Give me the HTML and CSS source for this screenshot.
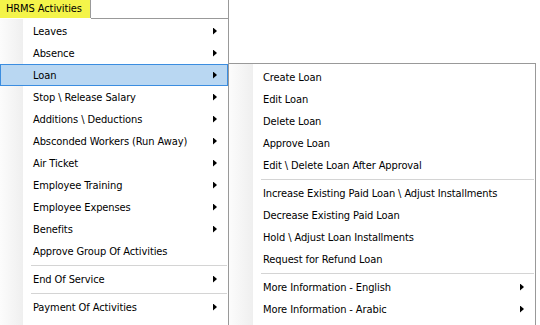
FILE: index.html
```html
<!DOCTYPE html>
<html lang="en">
<head>
    <meta charset="UTF-8">
    <meta name="viewport" content="width=device-width, initial-scale=1.0">
    <title>HRMS Activities</title>
    <link rel="stylesheet" href="styles.css">
</head>
<body>
    <div class="bar">
        <div class="tab">HRMS Activities</div>
        <div class="bar-rest"></div>
    </div>

    <div class="menus">
        <div class="menu main-menu">
            <div class="item">Leaves<span class="arrow"></span></div>
            <div class="item">Absence<span class="arrow"></span></div>
            <div class="item active">Loan<span class="arrow"></span></div>
            <div class="item">Stop \ Release Salary<span class="arrow"></span></div>
            <div class="item">Additions \ Deductions<span class="arrow"></span></div>
            <div class="item">Absconded Workers (Run Away)<span class="arrow"></span></div>
            <div class="item">Air Ticket<span class="arrow"></span></div>
            <div class="item">Employee Training<span class="arrow"></span></div>
            <div class="item">Employee Expenses<span class="arrow"></span></div>
            <div class="item">Benefits<span class="arrow"></span></div>
            <div class="item">Approve Group Of Activities</div>
            <div class="sep"></div>
            <div class="item">End Of Service<span class="arrow"></span></div>
            <div class="sep"></div>
            <div class="item">Payment Of Activities<span class="arrow"></span></div>
        </div>

        <div class="menu sub-menu">
            <div class="item">Create Loan</div>
            <div class="item">Edit Loan</div>
            <div class="item">Delete Loan</div>
            <div class="item">Approve Loan</div>
            <div class="item">Edit \ Delete Loan After Approval</div>
            <div class="sep"></div>
            <div class="item">Increase Existing Paid Loan \ Adjust Installments</div>
            <div class="item">Decrease Existing Paid Loan</div>
            <div class="item">Hold \ Adjust Loan Installments</div>
            <div class="item">Request for Refund Loan</div>
            <div class="sep"></div>
            <div class="item">More Information - English<span class="arrow"></span></div>
            <div class="item">More Information - Arabic<span class="arrow"></span></div>
        </div>
    </div>
</body>
</html>
```

FILE: styles.css
```css
body {
    font-family: "DejaVu Sans Condensed", "DejaVu Sans", sans-serif;
    font-size: 11px;
    letter-spacing: -0.1px;
    color: #000;
    margin: 0;
    padding: 0;
    background-color: #fff;
    overflow: hidden;
}
.bar {
    display: flex;
    align-items: flex-start;
}
.tab {
    width: 84px;
    height: 18px;
    line-height: 18px;
    padding-left: 6px;
    background-color: #f4f44a;
    border-right: 1px solid #999;
}
.bar-rest {
    width: 137px;
    height: 18px;
    border-bottom: 1px solid #999;
    border-right: 1px solid #999;
}
.menus {
    display: flex;
    align-items: flex-start;
}
.menu {
    background: linear-gradient(to right, #fcfcfc, #efefef) no-repeat;
    background-color: #fff;
    padding-bottom: 20px;
}
.main-menu {
    width: 228px;
    padding-top: 1px;
    border-right: 1px solid #999;
    background-size: 23px 100%;
}
.sub-menu {
    width: 306px;
    margin-top: 44px;
    margin-left: -1px;
    padding-top: 2px;
    border: 1px solid #999;
    background-size: 24px 100%;
}
.item {
    display: flex;
    align-items: center;
    height: 22px;
    padding-left: 33px;
    white-space: nowrap;
}
.sub-menu .item {
    padding-left: 34px;
}
.item.active {
    background-color: #b9d7f2;
    box-shadow: inset 0 0 0 1px #3b8de0;
}
.arrow {
    width: 4px;
    height: 7px;
    margin-left: auto;
    margin-right: 11px;
    background-color: #000;
    clip-path: polygon(0 0, 100% 50%, 0 100%);
}
.sep {
    height: 6px;
    margin-left: 31px;
    margin-right: 1px;
    background: linear-gradient(#d4d4d4, #d4d4d4) no-repeat 0 3px / 100% 1px;
}
.sub-menu .sep {
    margin-left: 32px;
}
```
